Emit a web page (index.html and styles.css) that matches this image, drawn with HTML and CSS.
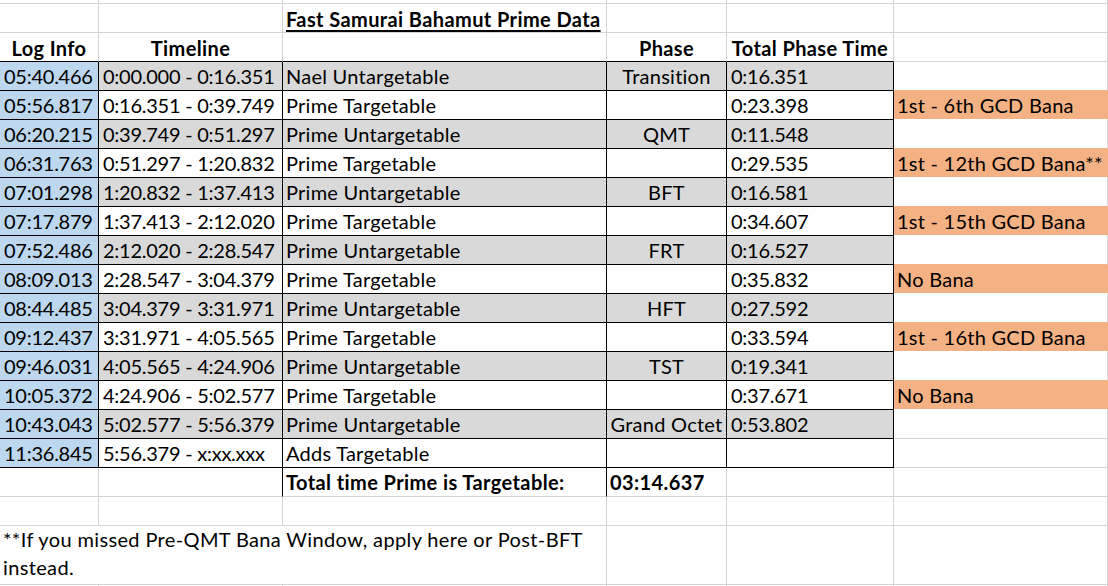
FILE: index.html
```html
<!DOCTYPE html>
<html>
<head>
<meta charset="utf-8">
<link rel="stylesheet" href="styles.css">
</head>
<body>
<div class="sheet">
  <!-- partial top row -->
  <div class="c r0"></div><div class="c r0"></div><div class="c r0"></div><div class="c r0"></div><div class="c r0"></div><div class="c r0 cf"></div>

  <!-- title row -->
  <div class="c"></div><div class="c"></div><div class="c title"><span>Fast Samurai Bahamut Prime Data</span></div><div class="c"></div><div class="c"></div><div class="c cf"></div>

  <!-- header row -->
  <div class="c hd ctr">Log Info</div><div class="c hd ctr">Timeline</div><div class="c hd"></div><div class="c hd ctr">Phase</div><div class="c hd ctr">Total Phase Time</div><div class="c cf"></div>

  <!-- data -->
  <div class="c d blue num">05:40.466</div><div class="c d gray num">0:00.000 - 0:16.351</div><div class="c d gray txt">Nael Untargetable</div><div class="c d gray ctr txt">Transition</div><div class="c d gray num">0:16.351</div><div class="c cf pre"></div>
  <div class="c d blue num">05:56.817</div><div class="c d num">0:16.351 - 0:39.749</div><div class="c d txt">Prime Targetable</div><div class="c d ctr"></div><div class="c d num">0:23.398</div><div class="c cf or txt">1st - 6th GCD Bana</div>
  <div class="c d blue num">06:20.215</div><div class="c d gray num">0:39.749 - 0:51.297</div><div class="c d gray txt">Prime Untargetable</div><div class="c d gray ctr txt">QMT</div><div class="c d gray num">0:11.548</div><div class="c cf pre"></div>
  <div class="c d blue num">06:31.763</div><div class="c d num">0:51.297 - 1:20.832</div><div class="c d txt">Prime Targetable</div><div class="c d ctr"></div><div class="c d num">0:29.535</div><div class="c cf or txt">1st - 12th GCD Bana**</div>
  <div class="c d blue num">07:01.298</div><div class="c d gray num">1:20.832 - 1:37.413</div><div class="c d gray txt">Prime Untargetable</div><div class="c d gray ctr txt">BFT</div><div class="c d gray num">0:16.581</div><div class="c cf pre"></div>
  <div class="c d blue num">07:17.879</div><div class="c d num">1:37.413 - 2:12.020</div><div class="c d txt">Prime Targetable</div><div class="c d ctr"></div><div class="c d num">0:34.607</div><div class="c cf or txt">1st - 15th GCD Bana</div>
  <div class="c d blue num">07:52.486</div><div class="c d gray num">2:12.020 - 2:28.547</div><div class="c d gray txt">Prime Untargetable</div><div class="c d gray ctr txt">FRT</div><div class="c d gray num">0:16.527</div><div class="c cf pre"></div>
  <div class="c d blue num">08:09.013</div><div class="c d num">2:28.547 - 3:04.379</div><div class="c d txt">Prime Targetable</div><div class="c d ctr"></div><div class="c d num">0:35.832</div><div class="c cf or txt">No Bana</div>
  <div class="c d blue num">08:44.485</div><div class="c d gray num">3:04.379 - 3:31.971</div><div class="c d gray txt">Prime Untargetable</div><div class="c d gray ctr txt">HFT</div><div class="c d gray num">0:27.592</div><div class="c cf pre"></div>
  <div class="c d blue num">09:12.437</div><div class="c d num">3:31.971 - 4:05.565</div><div class="c d txt">Prime Targetable</div><div class="c d ctr"></div><div class="c d num">0:33.594</div><div class="c cf or txt">1st - 16th GCD Bana</div>
  <div class="c d blue num">09:46.031</div><div class="c d gray num">4:05.565 - 4:24.906</div><div class="c d gray txt">Prime Untargetable</div><div class="c d gray ctr txt">TST</div><div class="c d gray num">0:19.341</div><div class="c cf pre"></div>
  <div class="c d blue num">10:05.372</div><div class="c d num">4:24.906 - 5:02.577</div><div class="c d txt">Prime Targetable</div><div class="c d ctr"></div><div class="c d num">0:37.671</div><div class="c cf or txt">No Bana</div>
  <div class="c d blue num">10:43.043</div><div class="c d gray num">5:02.577 - 5:56.379</div><div class="c d gray txt">Prime Untargetable</div><div class="c d gray ctr txt">Grand Octet</div><div class="c d gray num">0:53.802</div><div class="c cf"></div>
  <div class="c d blue num">11:36.845</div><div class="c d num">5:56.379 - x:xx.xxx</div><div class="c d txt">Adds Targetable</div><div class="c d ctr"></div><div class="c d"></div><div class="c cf"></div>

  <!-- total row -->
  <div class="c"></div><div class="c kr"></div><div class="c kr bold">Total time Prime is Targetable:</div><div class="c bold">03:14.637</div><div class="c"></div><div class="c cf"></div>

  <!-- empty row -->
  <div class="c"></div><div class="c"></div><div class="c"></div><div class="c"></div><div class="c"></div><div class="c cf"></div>

  <!-- note row -->
  <div class="c note">**If you missed Pre-QMT Bana Window, apply here or Post-BFT instead.</div><div class="c"></div><div class="c"></div><div class="c cf"></div>

  <!-- partial last row -->
  <div class="c"></div><div class="c"></div><div class="c"></div><div class="c"></div><div class="c"></div><div class="c cf"></div>
</div>
</body>
</html>
```

FILE: styles.css
```css
html, body {
  margin: 0;
  padding: 0;
  background: #ffffff;
}

body {
  font-family: Lato, "Liberation Sans", sans-serif;
  font-size: 20px;
  color: #000000;
  overflow: hidden;
}

.sheet {
  display: grid;
  grid-template-columns: 99px 184px 324px 120px 167px 214px;
  grid-template-rows: 4px 29px 29px repeat(14, 29px) 29px 29px 59px 29px;
  width: 1108px;
}

.c {
  box-sizing: border-box;
  border-right: 1px solid #d4d4d4;
  border-bottom: 1px solid #d4d4d4;
  padding: 0 3px;
  display: flex;
  align-items: center;
  white-space: nowrap;
  overflow: visible;
  line-height: 1;
}

.r0 {
  padding: 0;
}

.ctr {
  justify-content: center;
}

.num {
  letter-spacing: -0.25px;
  padding-left: 4px;
}

.txt {
  letter-spacing: 0.25px;
}

.hd {
  font-weight: 700;
  letter-spacing: 0.38px;
  border-bottom-color: #000000;
  padding-top: 1px;
}

.title {
  font-weight: 700;
  letter-spacing: 0.4px;
  padding-top: 2px;
}

.title span {
  text-decoration: underline;
  text-underline-offset: 3px;
  text-decoration-thickness: 2px;
}

.d {
  border-right-color: #000000;
  border-bottom-color: #000000;
}

.blue {
  background: #bdd7ee;
}

.gray {
  background: #d9d9d9;
}

.pre {
  border-bottom-color: #f4b183;
}

.or {
  background: #f4b183;
  border-right-color: #f4b183;
  border-bottom-color: #ffffff;
}

.kr {
  border-right-color: #000000;
}

.bold {
  font-weight: 700;
  letter-spacing: 0.4px;
}

.note {
  grid-column: span 3;
  white-space: normal;
  line-height: 28px;
  letter-spacing: 0.36px;
  align-items: center;
  padding-bottom: 5px;
  padding-right: 16px;
}
```
